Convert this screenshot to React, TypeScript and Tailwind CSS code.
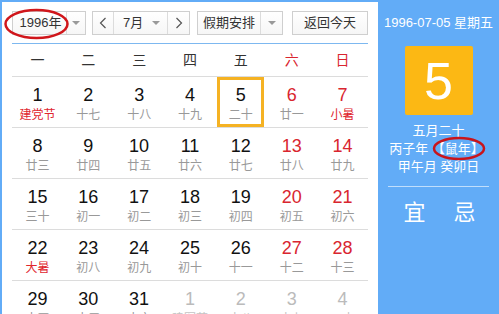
import React from 'react';

type Day = { d: number; l: string; red?: boolean; festival?: boolean; other?: boolean };

const weeks: Day[][] = [
  [
    { d: 1, l: '建党节', festival: true },
    { d: 2, l: '十七' },
    { d: 3, l: '十八' },
    { d: 4, l: '十九' },
    { d: 5, l: '二十' },
    { d: 6, l: '廿一', red: true },
    { d: 7, l: '小暑', red: true, festival: true },
  ],
  [
    { d: 8, l: '廿三' },
    { d: 9, l: '廿四' },
    { d: 10, l: '廿五' },
    { d: 11, l: '廿六' },
    { d: 12, l: '廿七' },
    { d: 13, l: '廿八', red: true },
    { d: 14, l: '廿九', red: true },
  ],
  [
    { d: 15, l: '三十' },
    { d: 16, l: '初一' },
    { d: 17, l: '初二' },
    { d: 18, l: '初三' },
    { d: 19, l: '初四' },
    { d: 20, l: '初五', red: true },
    { d: 21, l: '初六', red: true },
  ],
  [
    { d: 22, l: '大暑', festival: true },
    { d: 23, l: '初八' },
    { d: 24, l: '初九' },
    { d: 25, l: '初十' },
    { d: 26, l: '十一' },
    { d: 27, l: '十二', red: true },
    { d: 28, l: '十三', red: true },
  ],
  [
    { d: 29, l: '十四' },
    { d: 30, l: '十五' },
    { d: 31, l: '十六' },
    { d: 1, l: '建军节', other: true },
    { d: 2, l: '十八', other: true },
    { d: 3, l: '十九', other: true },
    { d: 4, l: '二十', other: true },
  ],
];

const weekdays = ['一', '二', '三', '四', '五', '六', '日'];

const Arrow = () => (
  <span className="block w-0 h-0 border-l-[4px] border-r-[4px] border-t-[4px] border-l-transparent border-r-transparent border-t-[#999]" />
);

const Chevron = ({ dir }: { dir: 'l' | 'r' }) => (
  <svg width="8" height="12" viewBox="0 0 8 12" fill="none">
    <path d={dir === 'l' ? 'M6.5 1 L1.5 6 L6.5 11' : 'M1.5 1 L6.5 6 L1.5 11'} stroke="#555" strokeWidth="1.2" />
  </svg>
);

const box = 'flex h-[24px] border border-[#cfcfcf] bg-gradient-to-b from-white to-[#f6f6f6] text-[13px] text-[#333]';

export default function App() {
  return (
    <div
      className="relative w-[499px] h-[314px] overflow-hidden bg-[#62acf7] flex items-start"
      style={{ fontFamily: '"Liberation Sans", "Noto Sans CJK SC", sans-serif' }}
    >
      {/* calendar */}
      <div className="mt-[2px] ml-[2px] w-[376px] shrink-0 bg-white flex flex-col px-[10px] pb-[20px]">
        <div className="flex shrink-0 items-center mt-[9px] h-[24px]">
          <div className={`${box} w-[74px]`}>
            <div className="flex-1 flex items-center justify-center border-r border-[#dcdcdc] pl-[2px]">1996年</div>
            <div className="w-[18px] flex items-center justify-center"><Arrow /></div>
          </div>
          <div className={`${box} w-[98px] ml-[6px]`}>
            <div className="w-[21px] flex items-center justify-center border-r border-[#dcdcdc]"><Chevron dir="l" /></div>
            <div className="flex-1 flex items-center border-r border-[#dcdcdc] pl-[9px] pr-[7px] justify-between">
              <span>7月</span>
              <Arrow />
            </div>
            <div className="w-[21px] flex items-center justify-center"><Chevron dir="r" /></div>
          </div>
          <div className={`${box} w-[86px] ml-[7px]`}>
            <div className="flex-1 flex items-center justify-center border-r border-[#dcdcdc]">假期安排</div>
            <div className="w-[21px] flex items-center justify-center"><Arrow /></div>
          </div>
          <div className={`${box} w-[76px] ml-[9px] items-center justify-center`}>返回今天</div>
        </div>

        <div className="mt-[8px] h-[1px] shrink-0 bg-[#7db8f0]" />

        <div className="grid shrink-0 grid-cols-7 h-[33px] items-center text-[14px] border-b border-[#dcdcdc]">
          {weekdays.map((w, i) => (
            <div key={w} className={`text-center ${i >= 5 ? 'text-[#d9252f]' : 'text-[#333]'}`}>{w}</div>
          ))}
        </div>

        {weeks.map((wk, r) => (
          <div key={r} className="grid shrink-0 grid-cols-7 h-[51px] border-b border-[#dcdcdc]">
            {wk.map((day, c) => {
              const today = r === 0 && c === 4;
              const numColor = day.other ? 'text-[#bbbbbb]' : c >= 5 ? 'text-[#d9252f]' : 'text-[#111]';
              const lunColor = day.other ? 'text-[#c4c4c4]' : day.festival ? 'text-[#e0262e]' : 'text-[#999]';
              return (
                <div key={c} className="flex items-stretch justify-center px-[1px]">
                  <div
                    className={`flex-1 flex flex-col items-center ${
                      today ? 'border-[3px] border-[#f5b223] pt-[4px] mx-[1px]' : 'pt-[7px]'
                    }`}
                  >
                    <span className={`text-[18px] leading-[22px] ${numColor}`}>{day.d}</span>
                    <span className={`text-[12px] leading-[16px] mt-[1px] ${lunColor}`}>{day.l}</span>
                  </div>
                </div>
              );
            })}
          </div>
        ))}
      </div>

      {/* side panel */}
      <div className="flex-1 flex flex-col items-center text-white">
        <div className="mt-[15px] text-[13px] leading-[16px]">1996-07-05 星期五</div>
        <div className="mt-[15px] w-[68px] h-[69px] bg-[#fcb814] rounded-[2px] flex items-center justify-center text-[52px] leading-none">5</div>
        <div className="mt-[7px] text-[13px] leading-[18px]">五月二十</div>
        <div className="text-[13px] leading-[18px] -ml-[4px]">丙子年 【鼠年】</div>
        <div className="text-[13px] leading-[18px]">甲午月 癸卯日</div>
        <div className="mt-[10px] w-[101px] h-[1px] bg-white/60" />
        <div className="mt-[13px] flex gap-[28px] text-[22px] leading-[26px] pl-[2px]">
          <span>宜</span>
          <span>忌</span>
        </div>
      </div>

      {/* annotation ellipses */}
      <svg className="absolute left-0 top-0 pointer-events-none" width="499" height="314">
        <ellipse cx="36.5" cy="24" rx="31" ry="14" fill="none" stroke="#d0161b" strokeWidth="2.5" />
        <ellipse cx="459" cy="148.5" rx="25" ry="10.5" fill="none" stroke="#c9141b" strokeWidth="2.5" />
      </svg>
    </div>
  );
}
